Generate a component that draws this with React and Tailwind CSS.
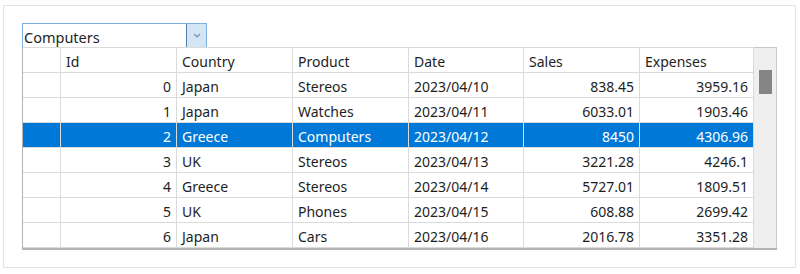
const rows = [
  [0, 'Japan', 'Stereos', '2023/04/10', '838.45', '3959.16'],
  [1, 'Japan', 'Watches', '2023/04/11', '6033.01', '1903.46'],
  [2, 'Greece', 'Computers', '2023/04/12', '8450', '4306.96'],
  [3, 'UK', 'Stereos', '2023/04/13', '3221.28', '4246.1'],
  [4, 'Greece', 'Stereos', '2023/04/14', '5727.01', '1809.51'],
  [5, 'UK', 'Phones', '2023/04/15', '608.88', '2699.42'],
  [6, 'Japan', 'Cars', '2023/04/16', '2016.78', '3351.28'],
]

const cols = 'grid grid-cols-[38px_116px_116px_116px_115px_116px_114px]'
const cell = 'h-[25px] flex items-center pt-[2px] px-[5px] border-r border-b border-[#dadada] whitespace-nowrap overflow-hidden'

export default function App() {
  return (
    <div className="w-[800px] h-[274px] bg-white pt-[5px] pl-[3px] font-['Noto_Sans','Open_Sans',sans-serif] text-[14px] text-[#1e1e1e]">
      <div className="w-[793px] h-[263px] border border-[#e3e3e3] pl-[18px] pt-[17px]">
        <div className="flex w-[185px] h-[25px] border border-[#7eaedf] bg-white">
          <div className="flex-1 flex items-center pl-[1px] pt-[3px] leading-none text-[14.5px]">Computers</div>
          <div className="w-[20px] h-full bg-[#d4e5f6] border-l border-[#5a7fa8] flex items-center justify-center">
            <svg width="8" height="5" viewBox="0 0 8 5">
              <path d="M1 1 L4 4 L7 1" fill="none" stroke="#7a8ea5" strokeWidth="1.2" />
            </svg>
          </div>
        </div>
        <div className="flex w-[755px] border-l border-b-2 border-[#b4b4b4] -mt-px">
          <div className="w-[731px]">
            <div className={`${cols} border-t border-[#dadada]`}>
              {['', 'Id', 'Country', 'Product', 'Date', 'Sales', 'Expenses'].map((h, i) => (
                <div key={i} className={cell}>{h}</div>
              ))}
            </div>
            {rows.map((r) => {
              const sel = r[0] === 2
              const c = sel ? 'bg-[#0078d7] text-white border-[#0078d7]' : ''
              return (
                <div key={r[0]} className={`${cols} ${sel ? 'bg-[#0078d7] text-white' : ''}`}>
                  <div className={`${cell} ${c}`}></div>
                  <div className={`${cell} ${c} justify-end`}>{r[0]}</div>
                  <div className={`${cell} ${c}`}>{r[1]}</div>
                  <div className={`${cell} ${c}`}>{r[2]}</div>
                  <div className={`${cell} ${c}`}>{r[3]}</div>
                  <div className={`${cell} ${c} justify-end`}>{r[4]}</div>
                  <div className={`${cell} ${c} justify-end`}>{r[5]}</div>
                </div>
              )
            })}
          </div>
          <div className="w-[23px] bg-[#efefef] border-t border-r border-[#c8c8c8] pt-[22px] pl-[5px]">
            <div className="w-[13px] h-[24px] bg-[#858585]"></div>
          </div>
        </div>
      </div>
    </div>
  )
}
